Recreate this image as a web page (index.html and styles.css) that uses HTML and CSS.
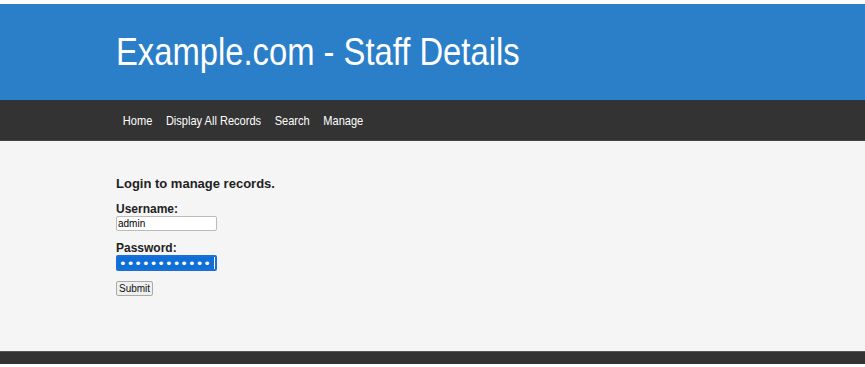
FILE: index.html
```html
<html>
<head>
<meta name="viewport" content="width=device-width, initial-scale=1">
<title>Example.com - Staff Details</title>
<link rel="stylesheet" href="styles.css">
</head>
<body>
<div class="header">
	<div class="wrap">
		<h1 class="title">Example.com - Staff Details</h1>
	</div>
</div>
<div class="nav">
	<div class="wrap">
		<div class="navlinks">
			<a href="#">Home</a>
			<a href="#">Display All Records</a>
			<a href="#">Search</a>
			<a href="#">Manage</a>
		</div>
	</div>
</div>
<div class="main">
	<div class="wrap">
		<h3 class="login-title">Login to manage records.</h3>
		<form class="login-form">
			<label for="username">Username:</label>
			<input type="text" id="username" class="field" value="admin">
			<label for="password">Password:</label>
			<input type="password" id="password" class="field pw-field" value="abcdefghijkl">
			<button type="button" class="submit-btn">Submit</button>
		</form>
	</div>
</div>
<div class="footer"></div>
</body>
</html>
```

FILE: styles.css
```css
body {
margin: 0;
padding-top: 4px;
background-color: white;
font-family: "Liberation Sans", Arial, Helvetica, sans-serif;
color: #222;
}

.wrap {
padding-left: 116px;
}

.header {
background-color: #2b7fc8;
height: 96px;
display: flex;
align-items: center;
}

.title {
margin: 0;
font-weight: normal;
font-size: 39px;
color: white;
transform: scaleX(0.84);
transform-origin: left center;
white-space: nowrap;
}

.nav {
background-color: #333;
height: 41px;
display: flex;
align-items: center;
border-bottom: 1px solid #444;
box-sizing: border-box;
}

.navlinks {
display: flex;
transform: scaleX(0.85);
transform-origin: left center;
}

.navlinks a {
color: white;
text-decoration: none;
font-size: 13px;
padding: 0 8px;
}

.main {
background-color: #f5f5f5;
height: 210px;
box-sizing: border-box;
padding-top: 35px;
}

.login-title {
margin: 0 0 12px 0;
font-size: 13px;
font-weight: bold;
}

.login-form {
display: flex;
flex-direction: column;
align-items: flex-start;
}

.login-form label {
font-size: 12px;
font-weight: bold;
line-height: 13px;
}

.field {
width: 101px;
height: 15px;
box-sizing: border-box;
border: 1px solid #bbb;
border-radius: 2px;
font-family: "Liberation Sans", Arial, sans-serif;
font-size: 10px;
padding: 0 1px;
margin-bottom: 11px;
background-color: white;
}

.pw-field {
height: 16px;
margin-bottom: 10px;
border: 2px solid #1a6fd8;
color: white;
background: linear-gradient(to right, #0f6fd6 0, #0f6fd6 96px, white 96px);
padding: 0 0 0 1px;
font-family: "DejaVu Sans", sans-serif;
font-size: 13px;
letter-spacing: 0;
outline: none;
}

.submit-btn {
font-family: "Liberation Sans", Arial, sans-serif;
font-size: 10px;
padding: 1px 2px;
height: 15px;
border: 1px solid #aaa;
border-radius: 2px;
background-color: #efefef;
color: #111;
}

.footer {
background-color: #333;
height: 13px;
border-top: 1px solid #555;
box-sizing: border-box;
}
```
